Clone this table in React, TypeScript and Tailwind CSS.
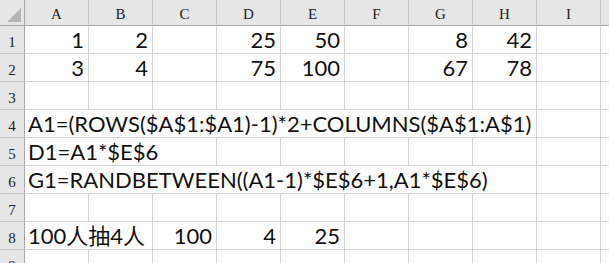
import type { ReactNode } from 'react';

type Cell = { text: string; span?: number; align?: 'left' | 'right' };

const COLUMNS = ['A', 'B', 'C', 'D', 'E', 'F', 'G', 'H', 'I'];

// Sparse rows: each entry maps a start column to a cell; overflowing text spans columns
const ROWS: Record<number, Record<number, Cell>> = {
  1: { 0: { text: '1' }, 1: { text: '2' }, 3: { text: '25' }, 4: { text: '50' }, 6: { text: '8' }, 7: { text: '42' } },
  2: { 0: { text: '3' }, 1: { text: '4' }, 3: { text: '75' }, 4: { text: '100' }, 6: { text: '67' }, 7: { text: '78' } },
  3: {},
  4: { 0: { text: 'A1=(ROWS($A$1:$A1)-1)*2+COLUMNS($A$1:A$1)', span: 8, align: 'left' } },
  5: { 0: { text: 'D1=A1*$E$6', span: 3, align: 'left' } },
  6: { 0: { text: 'G1=RANDBETWEEN((A1-1)*$E$6+1,A1*$E$6)', span: 8, align: 'left' } },
  7: {},
  8: { 0: { text: '100人抽4人', span: 2, align: 'left' }, 2: { text: '100' }, 3: { text: '4' }, 4: { text: '25' } },
  9: {},
};

const SPAN: Record<number, string> = {
  1: 'col-span-1',
  2: 'col-span-2',
  3: 'col-span-3',
  8: 'col-span-8',
};

function HeaderCell({ children }: { children?: ReactNode }) {
  return (
    <div className="h-[26px] flex items-end justify-center pb-[3px] bg-[#e6e6e6] border-r border-[#c8c8c8] border-b border-b-[#a8a8a8] text-[15px] text-[#222] font-['Liberation_Serif',serif]">
      {children}
    </div>
  );
}

function SheetRow({ index }: { index: number }) {
  const cells = ROWS[index] ?? {};
  const out: ReactNode[] = [];
  for (let c = 0; c < COLUMNS.length; ) {
    const cell = cells[c];
    const span = cell?.span ?? 1;
    out.push(
      <div
        key={c}
        className={`${SPAN[span]} h-[28px] border-r border-b border-[#d4d4d4] flex items-end pb-[2px] whitespace-nowrap overflow-visible ${
          cell?.align === 'left' ? 'justify-start pl-[3px]' : 'justify-end pr-[4px]'
        }`}
      >
        {cell?.text}
      </div>
    );
    c += span;
  }
  return (
    <>
      <div className="h-[28px] flex items-end justify-center pb-[3px] bg-[#e6e6e6] border-r border-r-[#a8a8a8] border-b border-b-[#c8c8c8] text-[15px] text-[#222] font-['Liberation_Serif',serif]">
        {index}
      </div>
      {out}
      <div className="h-[28px] border-b border-[#d4d4d4]" />
    </>
  );
}

export default function App() {
  return (
    <div className="w-[609px] h-[263px] overflow-hidden bg-white">
      <div className="grid grid-cols-[25px_repeat(9,64px)_1fr] text-[22px] leading-none text-[#111] font-['Lato','Noto_Sans_CJK_TC',sans-serif]">
        {/* select-all corner */}
        <div className="h-[26px] relative bg-[#e6e6e6] border-r border-r-[#a8a8a8] border-b border-b-[#a8a8a8]">
          <svg className="absolute right-[3px] bottom-[3px]" width="14" height="14" viewBox="0 0 14 14">
            <polygon points="14,0 14,14 0,14" fill="#b5b5b5" />
          </svg>
        </div>
        {COLUMNS.map(col => (
          <HeaderCell key={col}>{col}</HeaderCell>
        ))}
        <div className="h-[26px] bg-[#e6e6e6] border-b border-b-[#a8a8a8]" />
        {[1, 2, 3, 4, 5, 6, 7, 8, 9].map(i => (
          <SheetRow key={i} index={i} />
        ))}
      </div>
    </div>
  );
}
